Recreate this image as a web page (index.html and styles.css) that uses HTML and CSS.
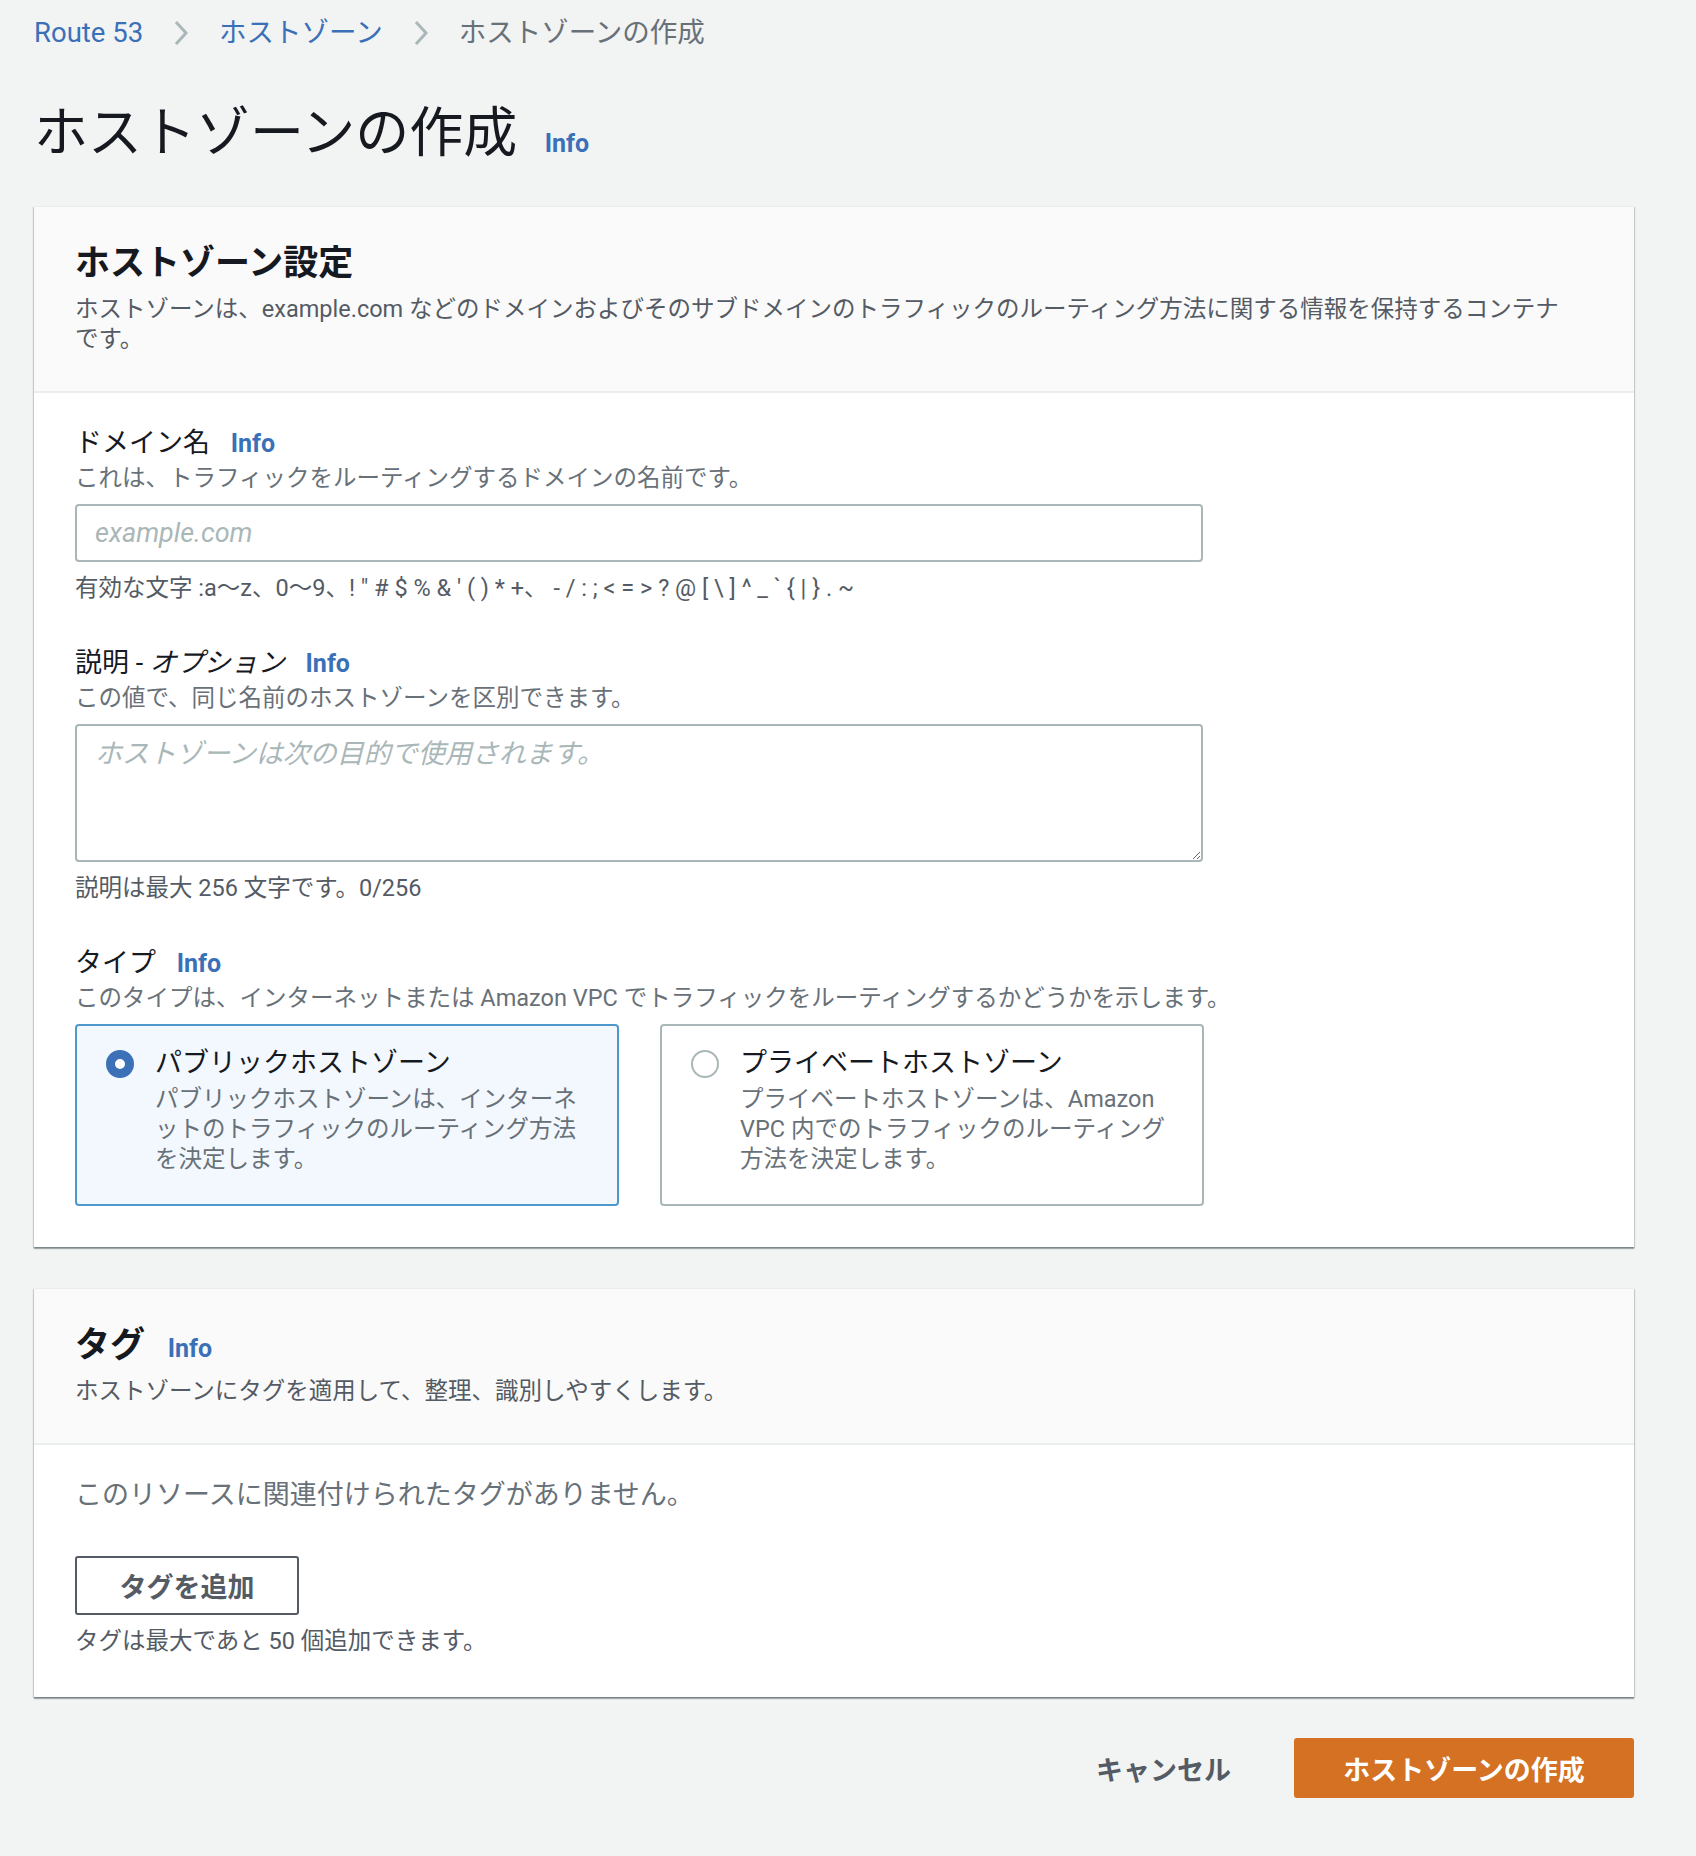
FILE: index.html
```html
<!DOCTYPE html>
<html lang="ja">
<head>
    <meta charset="UTF-8">
    <meta name="viewport" content="width=device-width, initial-scale=1.0">
    <title>ホストゾーンの作成</title>
    <link rel="stylesheet" href="styles.css">
</head>
<body>
  <div class="page">
    <!-- パンくず -->
    <nav class="breadcrumb">
      <a href="#">Route 53</a>
      <svg class="crumb-sep" viewBox="0 0 16 28"><path d="M3 3 L13 14 L3 25" /></svg>
      <a href="#">ホストゾーン</a>
      <svg class="crumb-sep" viewBox="0 0 16 28"><path d="M3 3 L13 14 L3 25" /></svg>
      <span class="crumb-current">ホストゾーンの作成</span>
    </nav>

    <h1 class="page-title">ホストゾーンの作成 <a href="#" class="info">Info</a></h1>

    <!-- ホストゾーン設定 -->
    <section class="card">
      <div class="card-header">
        <h2>ホストゾーン設定</h2>
        <p class="card-desc">ホストゾーンは、example.com などのドメインおよびそのサブドメインのトラフィックのルーティング方法に関する情報を保持するコンテナです。</p>
      </div>
      <div class="card-body">
        <div class="field">
          <div class="field-label">ドメイン名 <a href="#" class="info">Info</a></div>
          <div class="field-desc">これは、トラフィックをルーティングするドメインの名前です。</div>
          <input class="input" type="text" placeholder="example.com">
          <div class="field-hint">有効な文字 :a〜z、0〜9、! " # $ % &amp; ' ( ) * +、 - / : ; &lt; = &gt; ? @ [ \ ] ^ _ ` { | } . ~</div>
        </div>

        <div class="field">
          <div class="field-label">説明 - <i>オプション</i> <a href="#" class="info">Info</a></div>
          <div class="field-desc">この値で、同じ名前のホストゾーンを区別できます。</div>
          <textarea class="input textarea" placeholder="ホストゾーンは次の目的で使用されます。"></textarea>
          <div class="field-hint">説明は最大 256 文字です。0/256</div>
        </div>

        <div class="field">
          <div class="field-label">タイプ <a href="#" class="info">Info</a></div>
          <div class="field-desc">このタイプは、インターネットまたは Amazon VPC でトラフィックをルーティングするかどうかを示します。</div>
          <div class="tiles">
            <label class="tile selected">
              <span class="radio checked"></span>
              <span class="tile-text">
                <span class="tile-title">パブリックホストゾーン</span>
                <span class="tile-desc">パブリックホストゾーンは、インターネットのトラフィックのルーティング方法を決定します。</span>
              </span>
            </label>
            <label class="tile">
              <span class="radio"></span>
              <span class="tile-text">
                <span class="tile-title">プライベートホストゾーン</span>
                <span class="tile-desc">プライベートホストゾーンは、Amazon VPC 内でのトラフィックのルーティング方法を決定します。</span>
              </span>
            </label>
          </div>
        </div>
      </div>
    </section>

    <!-- タグ -->
    <section class="card">
      <div class="card-header">
        <h2>タグ <a href="#" class="info">Info</a></h2>
        <p class="card-desc">ホストゾーンにタグを適用して、整理、識別しやすくします。</p>
      </div>
      <div class="card-body">
        <p class="empty-text">このリソースに関連付けられたタグがありません。</p>
        <button class="btn btn-normal">タグを追加</button>
        <div class="field-hint">タグは最大であと 50 個追加できます。</div>
      </div>
    </section>

    <div class="actions">
      <button class="btn btn-link">キャンセル</button>
      <button class="btn btn-primary">ホストゾーンの作成</button>
    </div>
  </div>
</body>
</html>
```

FILE: styles.css
```css
/* 全体 */
body {
    margin: 0;
    background-color: #f2f3f3;
    color: #16191f;
    font-family: Roboto, "Noto Sans CJK JP", sans-serif;
}

.page {
    padding: 14px 62px 60px 34px;
}

a {
    color: #3a70b7;
    text-decoration: none;
}

/* パンくず */
.breadcrumb {
    display: flex;
    align-items: center;
    font-size: 27.5px;
    line-height: 38px;
}

.crumb-sep {
    width: 16px;
    height: 28px;
    margin: 0 30px;
    fill: none;
    stroke: #aab7b8;
    stroke-width: 3;
}

.crumb-current {
    color: #687078;
}

/* タイトル */
.page-title {
    margin: 50px 0 40px;
    font-size: 54px;
    line-height: 64px;
    height: 64px;
    font-weight: 400;
}

.page-title .info {
    margin-left: 14px;
}

.info {
    font-size: 25px;
    line-height: 1;
    font-weight: 700;
    margin-left: 14px;
}

/* カード */
.card {
    background-color: #fff;
    border-top: 1px solid #eaeded;
    box-shadow: 0 2px 1px 0 rgba(0, 28, 36, 0.3), 1px 1px 1px 0 rgba(0, 28, 36, 0.15), -1px 1px 1px 0 rgba(0, 28, 36, 0.15);
    margin-bottom: 41px;
}

.card-header {
    background-color: #fafafa;
    padding: 36px 60px 37px 41px;
    border-bottom: 2px solid #eaeded;
}

.card-header h2 {
    margin: 0;
    font-size: 35px;
    line-height: 42px;
    height: 42px;
    font-weight: 700;
}

.card-desc {
    margin: 9px 0 0;
    font-size: 23.5px;
    line-height: 30px;
    color: #545b64;
}

.card-body {
    padding: 30px 41px 41px;
}

/* フォーム */
.field + .field {
    margin-top: 40px;
}

.field-label {
    font-size: 27px;
    line-height: 40px;
    height: 40px;
}

.field-label i {
    font-style: italic;
}

.field-desc,
.field-hint {
    font-size: 23.5px;
    line-height: 30px;
    color: #687078;
}

.field-hint {
    margin-top: 11px;
    color: #545b64;
}

.input {
    display: block;
    box-sizing: border-box;
    width: 1128px;
    height: 58px;
    margin-top: 11px;
    padding: 6px 18px;
    border: 2px solid #aab7b8;
    border-radius: 4px;
    background: #fff;
    font-family: inherit;
    font-size: 27px;
    color: #16191f;
}

.input::placeholder {
    color: #aab7b8;
    font-style: italic;
}

.textarea {
    height: 138px;
    padding: 10px 18px;
    line-height: 36px;
}

/* タイル */
.tiles {
    display: grid;
    grid-template-columns: 1fr 1fr;
    gap: 41px;
    width: 1129px;
    margin-top: 11px;
}

.tile {
    display: flex;
    align-items: flex-start;
    box-sizing: border-box;
    height: 182px;
    padding: 18px 24px 0 29px;
    border: 2px solid #aab7b8;
    border-radius: 4px;
    background: #fff;
}

.tile.selected {
    border-color: #4f98cc;
    background-color: #f2f8fd;
}

.radio {
    flex: none;
    box-sizing: border-box;
    width: 28px;
    height: 28px;
    margin-top: 6px;
    margin-right: 21px;
    border: 2px solid #aab7b8;
    border-radius: 50%;
    background: #fff;
}

.radio.checked {
    border: 9px solid #3d71b7;
}

.tile-text {
    display: flex;
    flex-direction: column;
}

.tile-title {
    font-size: 27px;
    line-height: 38px;
}

.tile-desc {
    margin-top: 2px;
    font-size: 23.5px;
    line-height: 30px;
    color: #687078;
}

/* タグ */
.empty-text {
    margin: 0;
    font-size: 27px;
    line-height: 40px;
    color: #687078;
}

.btn {
    box-sizing: border-box;
    height: 59px;
    font-family: inherit;
    font-size: 27px;
    font-weight: 700;
    border-radius: 3px;
    cursor: pointer;
}

.btn-normal {
    display: block;
    width: 224px;
    margin-top: 41px;
    border: 2px solid #545b64;
    background: #fff;
    color: #545b64;
}

/* フッター */
.actions {
    display: flex;
    justify-content: flex-end;
    align-items: center;
}

.btn-link {
    padding: 0 38px;
    margin-right: 25px;
    border: none;
    background: transparent;
    color: #545b64;
}

.btn-primary {
    width: 340px;
    height: 60px;
    border: none;
    background-color: #d47122;
    color: #fff;
}
```
